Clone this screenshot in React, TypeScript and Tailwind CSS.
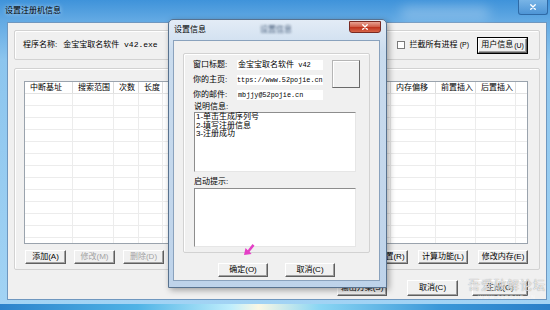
import React from "react";

type Col = { label: string; w: string };

// list view columns (middle ones sit under the dialog)
const COLS: Col[] = [
  { label: "中断基址", w: "w-[48px]" },
  { label: "搜索范围", w: "w-[41px]" },
  { label: "次数", w: "w-[25px]" },
  { label: "长度", w: "w-[24px]" },
  { label: "特征码", w: "w-[70px]" },
  { label: "寄存器", w: "w-[50px]" },
  { label: "数据类型", w: "w-[53px]" },
  { label: "修改数据", w: "w-[55px]" },
  { label: "内存偏移", w: "w-[45px]" },
  { label: "前置插入", w: "w-[40px]" },
  { label: "后置插入", w: "w-[40px]" },
];

const ROWS = Array.from({ length: 14 }, (_, i) => i);

function Btn({
  children,
  w,
  h = "h-[14px]",
  disabled = false,
}: {
  children: React.ReactNode;
  w: string;
  h?: string;
  disabled?: boolean;
}) {
  return (
    <button
      type="button"
      className={`flex shrink-0 items-center justify-center whitespace-nowrap border border-b-[#5f5f5f] border-l-white border-r-[#5f5f5f] border-t-white bg-[#f0f0f0] text-[8px] leading-none shadow-[inset_-1px_-1px_0_#a0a0a0] ${w} ${h} ${
        disabled ? "text-[#a3a3a3]" : "text-black"
      }`}
    >
      {children}
    </button>
  );
}

function Sunken({ className, children }: { className: string; children?: React.ReactNode }) {
  return (
    <div
      className={`border border-b-[#e6e6e6] border-l-[#8d8d8d] border-r-[#e6e6e6] border-t-[#8d8d8d] bg-white ${className}`}
    >
      {children}
    </div>
  );
}

function ListView() {
  return (
    <div className="h-[163px] overflow-hidden border border-[#9aa3ad] bg-white">
      <div className="flex h-[12px] border-b border-[#e3e3e3]">
        {COLS.map((c) => (
          <div
            key={c.label}
            className={`flex shrink-0 items-center whitespace-nowrap border-r border-[#dcdcdc] pl-[5px] text-[8px] leading-none ${c.w}`}
          >
            {c.label}
          </div>
        ))}
      </div>
      {ROWS.map((r) => (
        <div key={r} className="flex h-[12px] border-b border-[#ececec]">
          {COLS.map((c) => (
            <div key={c.label} className={`shrink-0 border-r border-[#ececec] ${c.w}`} />
          ))}
        </div>
      ))}
    </div>
  );
}

function CloseX({ className }: { className: string }) {
  return (
    <svg viewBox="0 0 10 8" className={className}>
      <path d="M2 1 L8 7 M8 1 L2 7" stroke="white" strokeWidth="1.8" strokeLinecap="round" />
    </svg>
  );
}

function SettingsDialog() {
  return (
    <div className="absolute left-[168px] top-[19px] flex h-[269px] w-[219px] flex-col rounded-t-[5px] border border-[#58728f] bg-[linear-gradient(180deg,#e3ecf6_0%,#cadcee_12%,#bed3ea_100%)] pb-[6px] pl-[4px] pr-[6px] shadow-[2px_2px_6px_rgba(0,0,0,0.35)]">
      {/* title bar */}
      <div className="relative flex h-[20px] shrink-0 items-center pl-[1px]">
        <span className="text-[8px] leading-none text-black">设置信息</span>
        <span className="ml-[54px] text-[8px] leading-none text-[#445b78] blur-[1.2px]">设置信息</span>
        <div className="absolute right-[-1px] top-[1px] flex h-[12px] w-[32px] items-center justify-center rounded-b-[3px] border border-[#7a2a22] bg-[linear-gradient(180deg,#e9a393_0%,#d2624d_45%,#c0351f_55%,#d6654a_100%)]">
          <CloseX className="h-[6px] w-[8px]" />
        </div>
      </div>

      {/* client */}
      <div className="flex flex-1 flex-col border border-[#8aa2bd] bg-[#f0f0f0] px-[9px] pt-[12px]">
        <div className="flex h-[200px] flex-col rounded-[2px] border border-[#d2d2d2] pl-[9px] pt-[6px] shadow-[inset_1px_1px_0_white]">
          <div className="flex">
            <div className="flex flex-col gap-[5px]">
              <div className="flex h-[10px] items-center">
                <span className="w-[44px] text-[8px] leading-none">窗口标题:</span>
                <div className="flex h-[10px] w-[86px] items-center bg-white pl-[1px] text-[8px] leading-none">
                  金宝宝取名软件<span className="font-['Liberation_Mono',monospace] text-[7px]">&nbsp;v42</span>
                </div>
              </div>
              <div className="flex h-[10px] items-center">
                <span className="w-[44px] text-[8px] leading-none">你的主页:</span>
                <div className="flex h-[10px] w-[86px] items-center overflow-hidden whitespace-nowrap bg-white font-['Liberation_Mono',monospace] text-[6.8px] leading-none">
                  <span className="ml-[-1ch]">https://www.52pojie.cn</span>
                </div>
              </div>
              <div className="flex h-[10px] items-center">
                <span className="w-[44px] text-[8px] leading-none">你的邮件:</span>
                <div className="flex h-[10px] w-[86px] items-center bg-white pl-[1px] font-['Liberation_Mono',monospace] text-[6.8px] leading-none">
                  mbjjy@52pojie.cn
                </div>
              </div>
            </div>
            <div className="ml-[9px] h-[28px] w-[28px] border border-b-[#6a6a6a] border-l-[#b5b5b5] border-r-[#6a6a6a] border-t-[#b5b5b5] bg-[#f0f0f0] shadow-[inset_1px_1px_0_white]" />
          </div>

          <div className="mt-[3px] flex h-[8px] items-center pl-[1px] text-[8px] leading-none">说明信息:</div>
          <Sunken className="ml-[1px] mt-[1px] h-[60px] w-[162px] pl-[1px] text-[8px] leading-[8.5px]">
            <div>1-单击生成序列号</div>
            <div>2-填写注册信息</div>
            <div>3-注册成功</div>
          </Sunken>

          <div className="mt-[6px] flex h-[8px] items-center pl-[1px] text-[8px] leading-none">启动提示:</div>
          <Sunken className="ml-[1px] mt-[2px] h-[59px] w-[162px]" />
        </div>

        <div className="mt-[10px] flex justify-center gap-[17px]">
          <Btn w="w-[50px]">确定(O)</Btn>
          <Btn w="w-[50px]">取消(C)</Btn>
        </div>
      </div>

      {/* pink pointer */}
      <svg viewBox="0 0 12 13" className="absolute left-[74px] top-[223px] h-[13px] w-[12px]">
        <polygon points="1,12 2.5,5 4.8,7.2 9.5,1 11.5,2.8 6.6,8.8 8.6,11" fill="#e43fc6" />
      </svg>
    </div>
  );
}

export default function App() {
  return (
    <div className="relative h-[310px] w-[550px] overflow-hidden bg-[linear-gradient(90deg,#2c82cb_0%,#4fb3e6_25%,#bfeefc_42%,#fbf8e4_47%,#8ad6f4_58%,#3a97d8_80%,#2a7fc8_100%)] font-['Liberation_Sans','Noto_Sans_CJK_SC',sans-serif] text-[8px] text-black">
      {/* main window */}
      <div className="flex h-[304px] flex-col bg-[linear-gradient(180deg,#3f93da_0px,#62a9e3_20px,#8cc5ee_60px,#a2d3f4_100%)]">
        <div className="relative flex h-[22px] shrink-0 items-center pl-[5px]">
          <span className="text-[8px] leading-none text-black [text-shadow:0_0_4px_rgba(255,255,255,0.9)]">设置注册机信息</span>
          <div className="absolute left-[400px] top-[6px] h-[14px] w-[90px] rounded-full bg-white/25 blur-[6px]" />
          <div className="absolute right-[2px] top-0 flex h-[15px] w-[30px] items-center justify-center rounded-b-[3px] border border-t-0 border-[#2f6aa6] bg-[linear-gradient(180deg,#78b4e6,#4e95d6)]">
            <CloseX className="h-[6px] w-[8px]" />
          </div>
        </div>

        <div className="mb-[4px] ml-[7px] mr-[3px] flex flex-1 flex-col border border-[#6f97bf] bg-[#f0f0f0] px-[6px] pt-[7px]">
          {/* program group */}
          <div className="flex h-[30px] shrink-0 items-center rounded-[2px] border border-[#d2d2d2] pl-[8px] pr-[11px] shadow-[inset_1px_1px_0_white]">
            <span className="text-[8px] leading-none">程序名称:</span>
            <span className="ml-[6px] font-['Liberation_Mono','Noto_Sans_CJK_SC',monospace] text-[8px] leading-none">
              金宝宝取名软件 v42.exe
            </span>
            <div className="ml-auto flex items-center">
              <div className="h-[8px] w-[8px] border border-[#7a7a7a] bg-white" />
              <span className="ml-[4px] text-[8px] leading-none">
                拦截所有进程 <span className="text-[7px]">(P)</span>
              </span>
            </div>
            <div className="ml-[8px] border border-black">
              <Btn w="w-[49px]" h="h-[15px]">
                用户信息 <span className="ml-[1px] text-[7px]">(U)</span>
              </Btn>
            </div>
          </div>

          {/* list group */}
          <div className="mt-[8px] flex h-[202px] shrink-0 flex-col rounded-[2px] border border-[#d2d2d2] pl-[9px] pr-[11px] pt-[12px] shadow-[inset_1px_1px_0_white]">
            <ListView />
            <div className="mt-[6px] flex items-center">
              <div className="ml-[1px] flex gap-[8px]">
                <Btn w="w-[41px]">添加(A)</Btn>
                <Btn w="w-[41px]" disabled>
                  修改(M)
                </Btn>
                <Btn w="w-[41px]" disabled>
                  删除(D)
                </Btn>
              </div>
              <div className="ml-auto flex gap-[10px]">
                <Btn w="w-[50px]">高级设置(R)</Btn>
                <Btn w="w-[50px]">计算功能(L)</Btn>
                <Btn w="w-[50px]">修改内存(E)</Btn>
              </div>
            </div>
          </div>

          {/* bottom buttons */}
          <div className="mt-[10px] flex justify-end pr-[12px]">
            <Btn w="w-[50px]" h="h-[16px]">
              输出方案(S)
            </Btn>
            <div className="ml-[20px]">
              <Btn w="w-[51px]" h="h-[16px]">
                取消(C)
              </Btn>
            </div>
            <div className="ml-[14px]">
              <Btn w="w-[56px]" h="h-[16px]">
                生成(G)
              </Btn>
            </div>
          </div>
        </div>
      </div>

      <SettingsDialog />

      {/* forum watermark */}
      <div className="pointer-events-none absolute left-[468px] top-[280px] flex flex-col items-center">
        <span className="text-[12px] leading-none tracking-[1px] text-white/80 [text-shadow:0_0_1px_rgba(80,80,80,0.8)]">吾爱破解论坛</span>
        <span className="mt-[3px] text-[5px] leading-none tracking-[1px] text-white/70">WWW.52POJIE.CN</span>
      </div>
    </div>
  );
}
